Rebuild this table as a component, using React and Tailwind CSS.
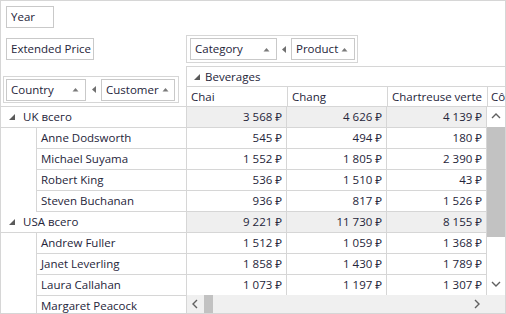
import React from 'react'

const font = { fontFamily: '"Open Sans", "Noto Sans", sans-serif' }

const UpTri = () => (
  <svg width="7" height="5" viewBox="0 0 7 5" className="shrink-0">
    <polygon points="0.5,4.5 3.5,1 6.5,4.5" fill="#7a7a7a" />
  </svg>
)

const LeftTri = () => (
  <svg width="4" height="7" viewBox="0 0 4 7" className="shrink-0">
    <polygon points="4,0 0,3.5 4,7" fill="#707070" />
  </svg>
)

const Expanded = () => (
  <svg width="6" height="6" viewBox="0 0 6 6" className="shrink-0">
    <polygon points="6,0 6,6 0,6" fill="#5a5a5a" />
  </svg>
)

const Chevron = ({ dir }) => {
  const pts = {
    up: '1,6 5,2 9,6',
    down: '1,2 5,6 9,2',
    left: '6,1 2,5 6,9',
    right: '2,1 6,5 2,9',
  }[dir]
  return (
    <svg width="10" height="10" viewBox="0 0 10 10">
      <polyline points={pts} fill="none" stroke="#606060" strokeWidth="1.4" />
    </svg>
  )
}

function Field({ label, w, sort }) {
  return (
    <div className={`h-[22px] border border-[#c9c9c9] bg-white flex items-center gap-[3px] pl-[4px] pr-[6px] ${w}`}>
      <span className="flex-1 whitespace-nowrap">{label}</span>
      {sort && <UpTri />}
    </div>
  )
}

const rows = [
  { name: 'UK всего', total: true, v: ['3 568 ₽', '4 626 ₽', '4 139 ₽'] },
  { name: 'Anne Dodsworth', v: ['545 ₽', '494 ₽', '180 ₽'] },
  { name: 'Michael Suyama', v: ['1 552 ₽', '1 805 ₽', '2 390 ₽'] },
  { name: 'Robert King', v: ['536 ₽', '1 510 ₽', '43 ₽'] },
  { name: 'Steven Buchanan', v: ['936 ₽', '817 ₽', '1 526 ₽'] },
  { name: 'USA всего', total: true, v: ['9 221 ₽', '11 730 ₽', '8 155 ₽'] },
  { name: 'Andrew Fuller', v: ['1 512 ₽', '1 059 ₽', '1 368 ₽'] },
  { name: 'Janet Leverling', v: ['1 858 ₽', '1 430 ₽', '1 789 ₽'] },
  { name: 'Laura Callahan', v: ['1 073 ₽', '1 197 ₽', '1 307 ₽'] },
]

const headW = ['w-[101px]', 'w-[100px]', 'w-[100px]']
const cellW = ['w-[100px]', 'w-[100px]', 'w-[100px]']

export default function App() {
  return (
    <div style={font} className="w-[506px] h-[314px] border border-[#d6d6d6] bg-white text-[11.5px] text-[#25253a] overflow-hidden flex flex-col">
      {/* filter area */}
      <div className="h-[32px] pl-[5px] pt-[5px] shrink-0">
        <Field label="Year" w="w-[48px]" />
      </div>

      {/* data / row / column header area */}
      <div className="h-[74px] flex shrink-0 border-b border-[#d6d6d6]">
        <div className="w-[185px] shrink-0 flex flex-col">
          <div className="pl-[5px] pt-[5px]">
            <Field label="Extended Price" w="w-[88px]" />
          </div>
          <div className="ml-[2px] mt-[16px] w-[176px] h-[27px] border border-[#d6d6d6] p-[2px] flex items-center">
            <Field label="Country" w="w-[80px]" sort />
            <div className="w-[15px] flex justify-center"><LeftTri /></div>
            <Field label="Customer" w="w-[74px]" sort />
          </div>
        </div>
        <div className="flex-1 flex flex-col min-w-0">
          <div className="h-[33px] pt-[2px] shrink-0">
            <div className="w-[172px] h-[28px] border border-[#d6d6d6] p-[2px] pl-[3px] flex items-center">
              <Field label="Category" w="w-[87px]" sort />
              <div className="w-[14px] flex justify-center"><LeftTri /></div>
              <Field label="Product" w="w-[64px]" sort />
            </div>
          </div>
          <div className="flex-1 border-l border-t border-[#d6d6d6] flex flex-col">
            <div className="h-[20px] shrink-0 flex items-center gap-[5px] pl-[7px] border-b border-[#d6d6d6]">
              <Expanded />
              <span>Beverages</span>
            </div>
            <div className="flex-1 flex whitespace-nowrap">
              {['Chai', 'Chang', 'Chartreuse verte'].map((c, i) => (
                <div key={c} className={`${headW[i]} shrink-0 border-r border-[#d6d6d6] pl-[4px] flex items-center`}>{c}</div>
              ))}
              <div className="pl-[3px] flex items-center overflow-hidden">Côte de Blaye</div>
            </div>
          </div>
        </div>
      </div>

      {/* body */}
      <div className="flex-1 flex min-h-0">
        <div className="w-[186px] shrink-0 border-r border-[#d6d6d6] flex flex-col">
          {rows.concat([{ name: 'Margaret Peacock' }]).map((r) =>
            r.total ? (
              <div key={r.name} className="h-[21px] shrink-0 border-b border-[#d6d6d6] flex items-center gap-[8px] pl-[8px]">
                <Expanded />
                <span>{r.name}</span>
              </div>
            ) : (
              <div key={r.name} className="h-[21px] shrink-0 pl-[35px] flex">
                <div className="flex-1 border-l border-b border-[#d6d6d6] pl-[4px] flex items-center">{r.name}</div>
              </div>
            )
          )}
        </div>
        <div className="flex-1 flex flex-col min-w-0">
          <div className="flex-1 flex min-h-0">
            <div className="flex flex-col">
              {rows.map((r) => (
                <div key={r.name} className={`h-[21px] shrink-0 flex border-b border-[#d6d6d6] ${r.total ? 'bg-[#efefef]' : ''}`}>
                  {r.v.map((v, i) => (
                    <div key={i} className={`${cellW[i]} shrink-0 border-r border-[#d6d6d6] pr-[4px] flex items-center justify-end whitespace-nowrap`}>{v}</div>
                  ))}
                </div>
              ))}
            </div>
            <div className="flex-1 flex flex-col">
              <div className="h-[20px] shrink-0 flex items-center justify-center"><Chevron dir="up" /></div>
              <div className="h-[110px] shrink-0 bg-[#c2c2c2]"></div>
              <div className="flex-1"></div>
              <div className="h-[20px] shrink-0 flex items-center justify-center"><Chevron dir="down" /></div>
            </div>
          </div>
          <div className="h-[18px] shrink-0 bg-[#f0f0f0] flex items-stretch">
            <div className="w-[17px] flex items-center justify-center"><Chevron dir="left" /></div>
            <div className="w-[9px] bg-[#c2c2c2]"></div>
            <div className="flex-1"></div>
            <div className="w-[18px] flex items-center justify-center"><Chevron dir="right" /></div>
            <div className="w-[18px]"></div>
          </div>
        </div>
      </div>
    </div>
  )
}
